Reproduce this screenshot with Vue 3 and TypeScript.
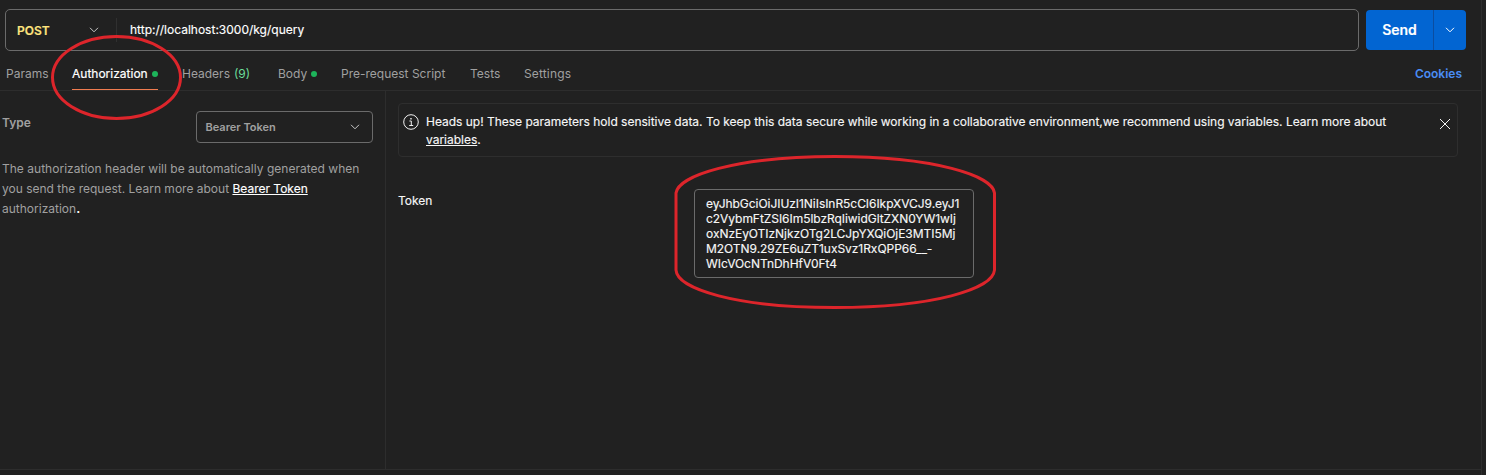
<script setup lang="ts">
interface Tab {
  id: string
  label: string
  count?: number
  dot?: boolean
  active?: boolean
}

const method = 'POST'
const url = 'http://localhost:3000/kg/query'

const tabs: Tab[] = [
  { id: 'params', label: 'Params' },
  { id: 'auth', label: 'Authorization', dot: true, active: true },
  { id: 'headers', label: 'Headers', count: 9 },
  { id: 'body', label: 'Body', dot: true },
  { id: 'script', label: 'Pre-request Script' },
  { id: 'tests', label: 'Tests' },
  { id: 'settings', label: 'Settings' },
]

const tokenLines: string[] = [
  'eyJhbGciOiJIUzI1NiIsInR5cCI6IkpXVCJ9.eyJ1',
  'c2VybmFtZSI6Im5lbzRqIiwidGltZXN0YW1wIj',
  'oxNzEyOTIzNjkzOTg2LCJpYXQiOjE3MTI5Mj',
  'M2OTN9.29ZE6uZT1uxSvz1RxQPP66__-',
  'WIcVOcNTnDhHfV0Ft4',
]
</script>

<template>
  <div class="app">
    <div class="workspace">
      <div class="request-row">
        <div class="url-bar">
          <div class="method">
            <span>{{ method }}</span>
            <svg class="chevron" width="10" height="6" viewBox="0 0 10 6"><path d="M1 .8 5 4.8 9 .8" /></svg>
          </div>
          <div class="url">{{ url }}</div>
        </div>
        <div class="send">
          <button class="send-main">Send</button>
          <button class="send-more">
            <svg class="chevron" width="10" height="6" viewBox="0 0 10 6"><path d="M1 .8 5 4.8 9 .8" /></svg>
          </button>
        </div>
      </div>

      <nav class="tabs">
        <div v-for="tab in tabs" :key="tab.id" :class="['tab', `tab-${tab.id}`, { active: tab.active }]">
          <span class="tab-label">{{ tab.label }}</span>
          <span v-if="tab.count" class="count">({{ tab.count }})</span>
          <i v-if="tab.dot" class="dot"></i>
        </div>
        <a class="cookies">Cookies</a>
      </nav>

      <div class="panels">
        <aside class="auth-side">
          <div class="type-row">
            <span class="type-label">Type</span>
            <div class="select">
              <span>Bearer Token</span>
              <svg class="chevron" width="10" height="6" viewBox="0 0 10 6"><path d="M1 .8 5 4.8 9 .8" /></svg>
            </div>
          </div>
          <p class="description">
            <span class="d1">The authorization header will be automatically generated when</span><br />
            <span>you send the request. Learn more about <a>Bearer Token</a></span><br />
            <span>authorization<b>.</b></span>
          </p>
        </aside>

        <main class="auth-main">
          <div class="notice">
            <svg class="info" width="16" height="16" viewBox="0 0 16 16">
              <circle cx="8" cy="8" r="7.3" />
              <path d="M6.4 7H8.3V11.3M6.2 11.5H10.2" />
              <path class="fill" d="M7.3 4.1h1.4v1.4H7.3z" />
            </svg>
            <div class="notice-text">
              <span>Heads up! These parameters hold sensitive data. To keep this data secure while working in a collaborative environment,we recommend using variables. Learn more about</span><br />
              <a>variables</a>.
            </div>
            <svg class="close" width="12" height="12" viewBox="0 0 12 12"><path d="M1 1 11 11M11 1 1 11" /></svg>
          </div>
          <div class="token-row">
            <label class="token-label">Token</label>
            <div class="token-box">
              <div v-for="line in tokenLines" :key="line">{{ line }}</div>
            </div>
          </div>
        </main>
      </div>
    </div>

    <svg class="annotations" width="1486" height="475" viewBox="0 0 1486 475">
      <ellipse cx="116.5" cy="77.5" rx="64" ry="41" />
      <path d="M676 193C678 176 735 156.500 835 156.500S993 176 994.500 193V270C993 289 934 307.500 835 307.500S677 289 676 270Z" />
    </svg>
  </div>
</template>

<style>
html,
body {
  margin: 0;
  background: #212121;
}
</style>

<style scoped>
.app {
  position: relative;
  width: 1486px;
  height: 475px;
  overflow: hidden;
  background: #212121;
  color: #f6f6f6;
  font-family: Inter, 'Liberation Sans', sans-serif;
  font-size: 12px;
  white-space: nowrap;
  -webkit-text-stroke: 0.15px currentColor;
}
.workspace {
  box-sizing: border-box;
  width: 1482px;
  height: 475px;
  padding-top: 9px;
  border-right: 1px solid #2d2d2d;
  display: flex;
  flex-direction: column;
}
.request-row {
  display: flex;
  gap: 7px;
  padding-left: 5px;
  height: 42px;
  flex: none;
}
.url-bar {
  box-sizing: border-box;
  width: 1354px;
  height: 42px;
  border: 1px solid #6b6b6b;
  border-radius: 5px;
  display: flex;
  align-items: center;
}
.method {
  box-sizing: border-box;
  width: 111px;
  height: 24px;
  padding: 0 17px 0 11px;
  border-right: 1px solid #303030;
  display: flex;
  align-items: center;
  justify-content: space-between;
  color: #ffe47e;
  font-weight: 600;
}
.url {
  padding: 0 0 2px 13px;
  color: #fff;
}
.chevron {
  fill: none;
  stroke: #c8c8c8;
  stroke-width: 1;
}
.send {
  display: flex;
  width: 100px;
  height: 40px;
  margin-top: 1px;
  border-radius: 4px;
  overflow: hidden;
}
button {
  border: 0;
  padding: 0;
  background: #0265d2;
  color: #fff;
  font: 600 14px Inter, sans-serif;
}
.send-main {
  width: 67px;
  padding-bottom: 2px;
}
.send-more {
  flex: 1;
  border-left: 1px solid #0b4da0;
}
.send-more .chevron {
  display: block;
  margin: auto;
  stroke: #fff;
}
.tabs {
  box-sizing: border-box;
  height: 40px;
  flex: none;
  padding: 6px 19px 0 6px;
  border-bottom: 1px solid #2d2d2d;
  display: flex;
  color: #a0a0a0;
  -webkit-text-stroke-width: 0;
}
.tab {
  box-sizing: border-box;
  display: flex;
  align-items: center;
  height: 33px;
}
.tab-params { width: 66px; }
.tab-auth { width: 86px; margin-right: 24px; }
.tab-headers { width: 96px; }
.tab-body { width: 63px; }
.tab-script { width: 129px; }
.tab-tests { width: 54px; }
.tab-settings { letter-spacing: 0.15px; }
.tab.active {
  color: #fff;
  border-bottom: 1px solid #f07c50;
  padding-top: 1px;
  -webkit-text-stroke: 0.2px #fff;
}
.tab.active .dot {
  margin-left: auto;
}
.count {
  margin-left: 4px;
  color: #6bdd9a;
}
.dot {
  width: 6px;
  height: 6px;
  margin-left: 4px;
  border-radius: 50%;
  background: #1db45a;
}
.cookies {
  margin-left: auto;
  line-height: 34px;
  color: #4a8df5;
  font-weight: 600;
}
.panels {
  display: flex;
  height: 378px;
  flex: none;
  border-bottom: 1px solid #2d2d2d;
}
.auth-side {
  box-sizing: border-box;
  width: 386px;
  padding: 20px 12px 0 2px;
  border-right: 1px solid #2d2d2d;
  color: #a0a0a0;
  -webkit-text-stroke-width: 0;
}
.type-row {
  display: flex;
  justify-content: space-between;
}
.type-label {
  line-height: 24px;
  font-weight: 600;
}
.select {
  box-sizing: border-box;
  width: 177px;
  height: 32px;
  padding: 0 12px 0 8.5px;
  border: 1px solid #6b6b6b;
  border-radius: 4px;
  display: flex;
  align-items: center;
  justify-content: space-between;
  font-size: 11px;
  font-weight: 600;
}
.description {
  margin: 16px 0 0;
  line-height: 20px;
}
.d1 {
  letter-spacing: 0.016px;
}
.description a {
  color: #fff;
  text-decoration: underline;
  -webkit-text-stroke: 0.15px #fff;
}
.description b {
  color: #fff;
}
.auth-main {
  flex: 1;
  padding: 12px 23px 0 12px;
}
.notice {
  box-sizing: border-box;
  height: 54px;
  padding: 10px 6px 0 4px;
  border: 1px solid #2e2e2e;
  border-radius: 4px;
  display: flex;
}
.info {
  fill: none;
  stroke: #f2f2f2;
  stroke-width: 1;
}
.info .fill {
  fill: #f2f2f2;
  stroke: none;
}
.notice-text {
  margin: -1px 0 0 7px;
  line-height: 18px;
  letter-spacing: -0.014px;
}
.notice-text a {
  text-decoration: underline;
}
.close {
  margin: 4px 0 0 auto;
  stroke: #f2f2f2;
  stroke-width: 1;
}
.token-row {
  display: flex;
  align-items: flex-start;
  padding-top: 32px;
}
.token-label {
  width: 296px;
  line-height: 24px;
}
.token-box {
  box-sizing: border-box;
  width: 280px;
  height: 89px;
  padding: 6px 11px;
  border: 1px solid #6b6b6b;
  border-radius: 4px;
  line-height: 15px;
  letter-spacing: -0.045px;
}
.annotations {
  position: absolute;
  inset: 0;
  fill: none;
  stroke: #dd252b;
  stroke-width: 3;
  pointer-events: none;
}
</style>
